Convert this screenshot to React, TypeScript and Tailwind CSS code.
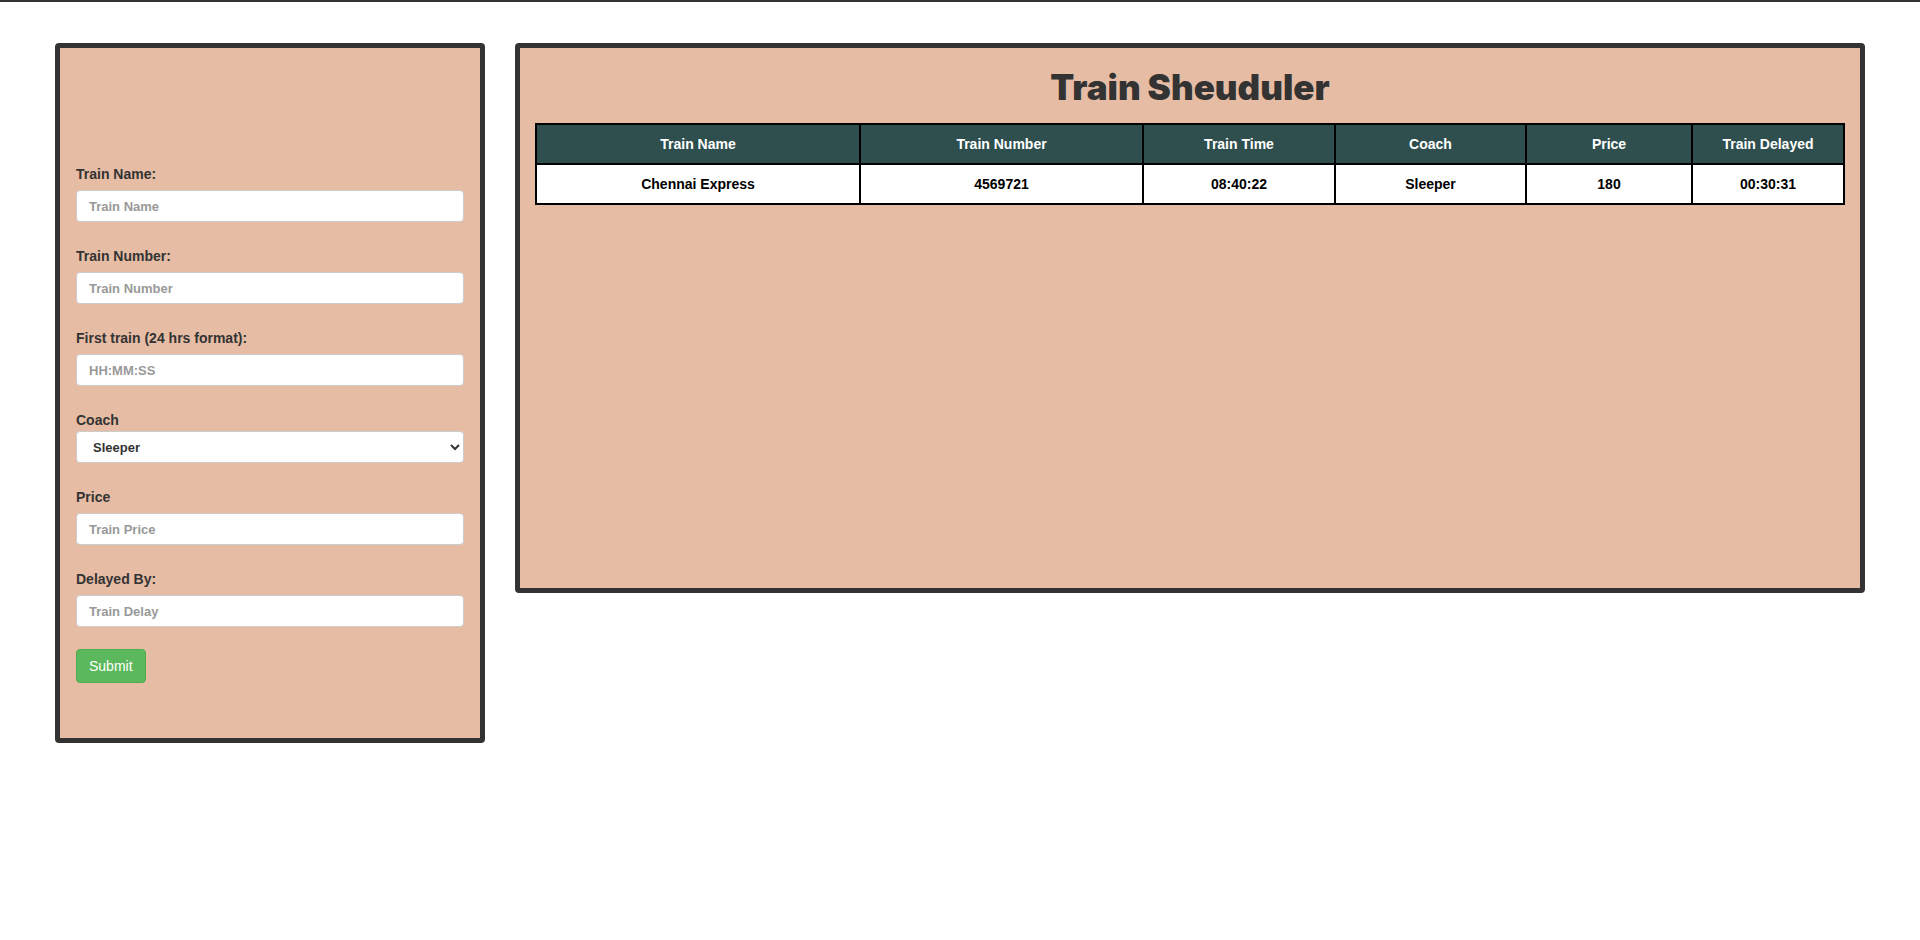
import React from 'react';

const fields = [
  { label: 'Train Name:', placeholder: 'Train Name' },
  { label: 'Train Number:', placeholder: 'Train Number' },
  { label: 'First train (24 hrs format):', placeholder: 'HH:MM:SS' },
];

const fields2 = [
  { label: 'Price', placeholder: 'Train Price' },
  { label: 'Delayed By:', placeholder: 'Train Delay' },
];

const trains = [
  {
    name: 'Chennai Express',
    number: '4569721',
    time: '08:40:22',
    coach: 'Sleeper',
    price: '180',
    delayed: '00:30:31',
  },
];

function Field({ label, placeholder }: { label: string; placeholder: string }) {
  return (
    <div className="flex flex-col">
      <label className="mb-[6px] text-sm leading-5 font-bold text-[#333]">{label}</label>
      <input
        type="text"
        placeholder={placeholder}
        className="h-8 w-full rounded border border-[#ccc] bg-white px-3 text-[13px] font-bold text-[#555] placeholder:text-[#999] outline-none"
      />
    </div>
  );
}

export default function App() {
  return (
    <div className="min-h-[940px] bg-white" style={{ fontFamily: '"Liberation Sans", Arial, sans-serif' }}>
      <div className="h-[2px] bg-[#333]" />

      <div className="flex items-start gap-[30px] px-[55px] pt-[41px]">
        {/* Form panel */}
        <div className="w-[430px] shrink-0 rounded border-[5px] border-[#333] bg-[#e6bca4] px-4 pt-[116px] pb-[55px]">
          <div className="flex flex-col gap-[24px]">
            {fields.map((f) => (
              <Field key={f.label} {...f} />
            ))}

            <div className="flex flex-col">
              <span className="mb-[1px] text-sm leading-5 font-bold text-[#333]">Coach</span>
              <select
                defaultValue="Sleeper"
                className="h-8 w-full rounded border border-[#ccc] bg-white px-3 text-[13px] font-bold text-[#333] outline-none"
              >
                <option>Sleeper</option>
                <option>AC</option>
                <option>General</option>
              </select>
            </div>

            {fields2.map((f) => (
              <Field key={f.label} {...f} />
            ))}
          </div>

          <button className="mt-[22px] h-[34px] rounded border border-[#4cae4c] bg-[#5cb85c] px-3 text-sm text-white">
            Submit
          </button>
        </div>

        {/* Schedule panel */}
        <div className="h-[550px] flex-1 rounded border-[5px] border-[#333] bg-[#e6bca4] px-[15px] pt-[19px]">
          <h1
            className="mb-4 text-center text-[35px] leading-10 font-black text-[#333]"
            style={{ fontFamily: 'Inter, "Liberation Sans", sans-serif' }}
          >
            Train Sheuduler
          </h1>

          <table className="w-full border-collapse border-2 border-black text-center text-sm font-bold">
            <thead>
              <tr className="h-10 bg-[#2f4f4f] text-white">
                <th className="w-[324px] border-2 border-black">Train Name</th>
                <th className="w-[283px] border-2 border-black">Train Number</th>
                <th className="w-[192px] border-2 border-black">Train Time</th>
                <th className="w-[191px] border-2 border-black">Coach</th>
                <th className="w-[166px] border-2 border-black">Price</th>
                <th className="border-2 border-black">Train Delayed</th>
              </tr>
            </thead>
            <tbody>
              {trains.map((t) => (
                <tr key={t.number} className="h-10 bg-white text-black">
                  <td className="border-2 border-black">{t.name}</td>
                  <td className="border-2 border-black">{t.number}</td>
                  <td className="border-2 border-black">{t.time}</td>
                  <td className="border-2 border-black">{t.coach}</td>
                  <td className="border-2 border-black">{t.price}</td>
                  <td className="border-2 border-black">{t.delayed}</td>
                </tr>
              ))}
            </tbody>
          </table>
        </div>
      </div>
    </div>
  );
}
